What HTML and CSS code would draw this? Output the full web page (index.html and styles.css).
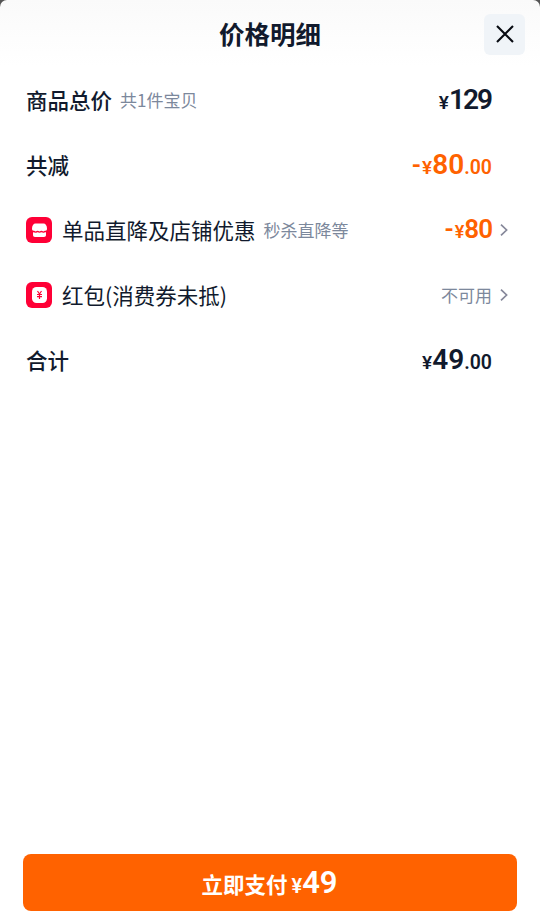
FILE: index.html
```
<!DOCTYPE html>
<html lang="zh-CN">
<head>
<meta charset="utf-8">
<title>价格明细</title>
<link rel="stylesheet" href="styles.css">
</head>
<body>
<main class="sheet">
  <header class="header">
    <h1 class="title">价格明细</h1>
    <button class="close" aria-label="关闭">
      <svg width="18" height="18" viewBox="0 0 18 18" fill="none" stroke="#080b12" stroke-width="2.100"><path d="M1 1 17 17M17 1 1 17"/></svg>
    </button>
  </header>
  <section class="rows">
    <div class="row">
      <span class="label strong">商品总价</span><span class="note">共1件宝贝</span>
      <span class="price"><span class="yen">¥</span><span class="num total">129</span></span>
    </div>
    <div class="row">
      <span class="label strong">共减</span>
      <span class="price orange"><span class="minus">-</span><span class="yen">¥</span><span class="num">80</span><span class="cents">.00</span></span>
    </div>
    <div class="row">
      <svg class="icon" width="26" height="26" viewBox="0 0 26 26"><rect width="26" height="26" rx="6" fill="#ff0036"/><path d="M9.500 6.500h8c2 0 3.500 2 3.500 5 0 1.300-.5 2.300-1.500 2.300-.9 0-1.500.6-2.200.6s-1.300-.6-1.900-.6-1.200.6-1.900.6-1.300-.6-1.900-.6-1.200.6-1.900.6-1.300-.6-2.200-.6c-1 0-1.500-1-1.500-2.300 0-3 1.500-5 3.500-5Z" fill="#fff"/><path d="M7 15.200c1 0 1.800.5 2.700.5s1.300-.5 1.900-.5 1.200.5 1.900.5 1.300-.5 1.900-.5 1.300.5 1.900.5 1.700-.5 2.700-.5V18c0 1.200-.7 2-2 2H9c-1.300 0-2-.8-2-2Z" fill="#fff"/></svg>
      <span class="label">单品直降及店铺优惠</span><span class="note">秒杀直降等</span>
      <span class="price orange small"><span class="minus">-</span><span class="yen">¥</span><span class="num">80</span></span>
      <svg class="arrow" width="8" height="12" viewBox="0 0 8 12" fill="none" stroke="#86889a" stroke-width="1.700"><path d="m1 .7 5.600 5.300L1 11.300"/></svg>
    </div>
    <div class="row">
      <svg class="icon" width="26" height="26" viewBox="0 0 26 26"><rect width="26" height="26" rx="6" fill="#ff0036"/><rect x="6" y="5" width="15" height="16" rx="4.500" fill="#fff"/><path d="m11.500 9 2 3 2-3M11 12.500h5M11 14.700h5M13.500 12v5" fill="none" stroke="#ff0036" stroke-width="1.200"/></svg>
      <span class="label">红包(消费券未抵)</span>
      <span class="price disabled">不可用</span>
      <svg class="arrow" width="8" height="12" viewBox="0 0 8 12" fill="none" stroke="#86889a" stroke-width="1.700"><path d="m1 .7 5.600 5.300L1 11.300"/></svg>
    </div>
    <div class="row">
      <span class="label strong">合计</span>
      <span class="price"><span class="yen">¥</span><span class="num">49</span><span class="cents">.00</span></span>
    </div>
  </section>
  <button class="pay"><span class="pay-label">立即支付</span><span class="yen">¥</span><span class="num">49</span></button>
</main>
</body>
</html>
```
FILE: styles.css
```
* { box-sizing: border-box; }
body {
  margin: 0;
  background: #555;
  color: #111a2d;
  font-family: "Noto Sans CJK SC", sans-serif;
}
button { border: 0; padding: 0; font-family: inherit; }
.sheet {
  height: 913px;
  display: flex;
  flex-direction: column;
  border-radius: 7px 7px 0 0;
  background: linear-gradient(#fafafa, #fff 66px);
}
.header {
  height: 67px;
  display: grid;
  grid-template-columns: 56px 1fr 41px;
  align-items: center;
  padding: 0 15px 0 0;
}
.title {
  grid-column: 2;
  margin: 0;
  padding-bottom: 2px;
  text-align: center;
  font-size: 25.500px;
  line-height: 36px;
  font-weight: 700;
}
.close {
  width: 41px;
  height: 41px;
  display: grid;
  place-items: center;
  margin-top: 1px;
  border-radius: 6px;
  background: #f0f4f8;
}
.rows { padding: 0 48px 0 26px; }
.row {
  height: 65px;
  display: flex;
  align-items: center;
  white-space: nowrap;
}
.label { font-size: 21.500px; line-height: 30px; }
.strong { font-weight: 500; }
.note { margin-left: 8px; font-size: 17px; line-height: 26px; color: #7c889c; }
.icon { margin-right: 10px; flex: none; }
.price {
  margin-left: auto;
  padding-top: 3px;
  display: flex;
  align-items: baseline;
  font-family: Roboto, "Noto Sans CJK SC", sans-serif;
  font-weight: 600;
  line-height: 32px;
}
.num { font-size: 28px; }
.total { letter-spacing: -2px; margin-right: 1px; }
.yen { font-size: 19px; }
.cents { font-size: 19.500px; }
.minus { font-size: 25px; margin-right: 1px; }
.orange { color: #ff6200; }
.small .num { font-size: 26px; letter-spacing: -1px; }
.small .yen { font-size: 18px; }
.small { padding-top: 2px; }
.disabled {
  padding-top: 0;
  font-family: "Noto Sans CJK SC", sans-serif;
  font-size: 17px;
  font-weight: 400;
  color: #7c889c;
}
.arrow { margin: 0 -16px 0 8px; flex: none; }
.pay {
  height: 57px;
  margin: auto 23px 2px;
  display: flex;
  justify-content: center;
  align-items: baseline;
  border-radius: 8px;
  background: #ff6200;
  color: #fff;
  line-height: 57px;
}
.pay-label { margin-left: -1px; font-size: 21.500px; font-weight: 700; }
.pay .yen { margin-left: 4px; font-family: Roboto, sans-serif; font-weight: 600; font-size: 20px; }
.pay .num { font-family: Roboto, sans-serif; font-weight: 600; font-size: 31px; }
```
